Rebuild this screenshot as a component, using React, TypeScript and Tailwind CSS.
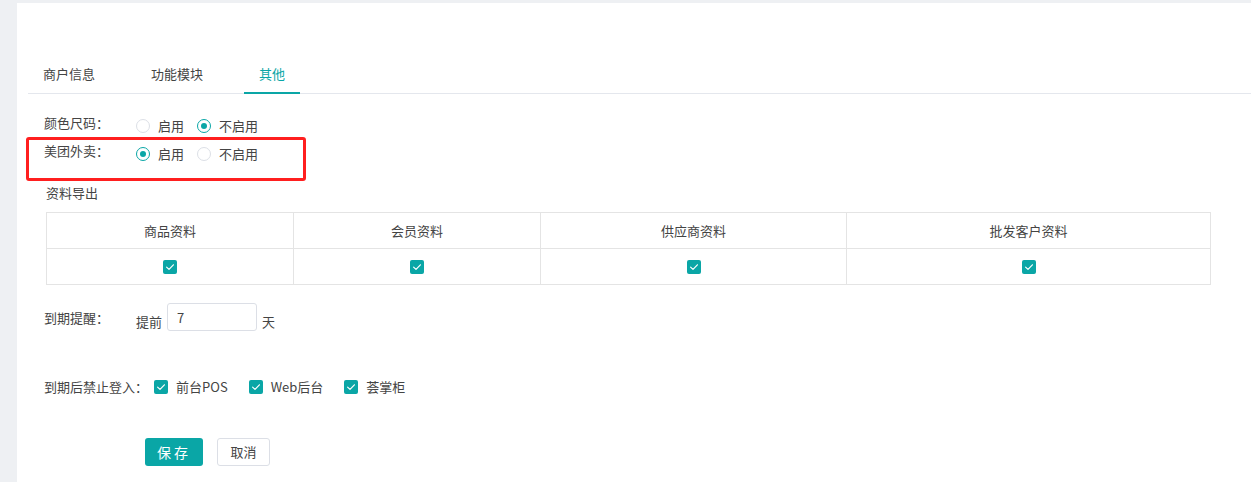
import React from 'react';

const TEAL = '#0aa6a6';

function CheckBox() {
  return (
    <span className="inline-flex h-[14px] w-[14px] shrink-0 items-center justify-center rounded-[2px] bg-[#0aa6a6]">
      <svg width="14" height="14" viewBox="0 0 14 14" fill="none">
        <path d="M3.6 7.1 L6 9.4 L10.4 4.8" stroke="#fff" strokeWidth="1.2" strokeLinecap="round" strokeLinejoin="round" />
      </svg>
    </span>
  );
}

function Radio({ checked, label }: { checked: boolean; label: string }) {
  return (
    <span className="flex items-center">
      {checked ? (
        <span className="flex h-[14px] w-[14px] items-center justify-center rounded-full border border-[#0aa6a6]">
          <span className="h-[6px] w-[6px] rounded-full bg-[#0aa6a6]" />
        </span>
      ) : (
        <span className="h-[14px] w-[14px] rounded-full border border-[#dcdfe6] bg-white" />
      )}
      <span className="ml-[8px] text-[13px] text-[#444]">{label}</span>
    </span>
  );
}

export default function App() {
  const tabs = ['商户信息', '功能模块', '其他'];
  const exportCols = [
    { name: '商品资料', w: 'w-[247px]' },
    { name: '会员资料', w: 'w-[247px]' },
    { name: '供应商资料', w: 'w-[306px]' },
    { name: '批发客户资料', w: 'flex-1' },
  ];

  return (
    <div
      className="h-[482px] overflow-hidden bg-[#eef0f3] pl-[17px] pt-[3px]"
      style={{ fontFamily: '"Noto Sans CJK SC", "Noto Sans", sans-serif' }}
    >
      <div className="relative h-full bg-white pt-[52px]">
        {/* Tabs */}
        <div className="ml-[11px] flex gap-[26px] border-b border-[#e4e7ed]">
          {tabs.map((t, i) => (
            <div
              key={t}
              className={
                i === 2
                  ? '-mb-px h-[39px] border-b-2 border-[#0aa6a6] px-[15px] text-[13px] leading-[37px] text-[#0aa6a6]'
                  : '-mb-px h-[39px] border-b-2 border-transparent px-[15px] text-[13px] leading-[37px] text-[#444]'
              }
            >
              {t}
            </div>
          ))}
        </div>

        <div className="pl-[27px]">
          {/* 颜色尺码 */}
          <div className="mt-[18px] flex h-[28px] items-start">
            <span className="w-[92px] text-[13px] leading-[22px] text-[#444]">颜色尺码：</span>
            <div className="flex h-[28px] items-center gap-[13px]">
              <Radio checked={false} label="启用" />
              <Radio checked label="不启用" />
            </div>
          </div>

          {/* 美团外卖 */}
          <div className="flex h-[28px] items-start">
            <span className="w-[92px] text-[13px] leading-[22px] text-[#444]">美团外卖：</span>
            <div className="flex h-[28px] items-center gap-[13px]">
              <Radio checked label="启用" />
              <Radio checked={false} label="不启用" />
            </div>
          </div>

          {/* 资料导出 */}
          <div className="ml-[2px] mt-[15px] text-[13px] leading-[20px] text-[#444]">资料导出</div>
          <div className="ml-[2px] mt-[9px] w-[1165px] border border-[#e4e4e4]">
            <div className="flex h-[36px] border-b border-[#e4e4e4]">
              {exportCols.map((c, i) => (
                <div
                  key={c.name}
                  className={`${c.w} flex items-center justify-center text-[13px] text-[#444] ${i < 3 ? 'border-r border-[#e4e4e4]' : ''}`}
                >
                  {c.name}
                </div>
              ))}
            </div>
            <div className="flex h-[35px]">
              {exportCols.map((c, i) => (
                <div
                  key={c.name}
                  className={`${c.w} flex items-center justify-center ${i < 3 ? 'border-r border-[#e4e4e4]' : ''}`}
                >
                  <CheckBox />
                </div>
              ))}
            </div>
          </div>

          {/* 到期提醒 */}
          <div className="mt-[18px] flex items-start">
            <span className="mt-[5px] w-[92px] text-[13px] leading-[20px] text-[#444]">到期提醒：</span>
            <div className="flex items-end">
              <span className="text-[13px] leading-[18px] text-[#444]">提前</span>
              <input
                defaultValue="7"
                className="ml-[5px] h-[28px] w-[90px] rounded-[3px] border border-[#dcdfe6] px-[9px] text-[13px] text-[#444] outline-none"
              />
              <span className="ml-[5px] text-[13px] leading-[18px] text-[#444]">天</span>
            </div>
          </div>

          {/* 到期后禁止登入 */}
          <div className="mt-[42px] flex h-[28px] items-center">
            <span className="w-[110px] text-[13px] text-[#444]">到期后禁止登入：</span>
            <div className="flex items-center gap-[21px]">
              {['前台POS', 'Web后台', '荟掌柜'].map((o) => (
                <span key={o} className="flex items-center">
                  <CheckBox />
                  <span className="ml-[8px] text-[13px] text-[#444]">{o}</span>
                </span>
              ))}
            </div>
          </div>

          {/* Buttons */}
          <div className="ml-[101px] mt-[37px] flex gap-[14px]">
            <button
              className="h-[28px] w-[58px] rounded-[3px] text-[14px] tracking-[3px] text-white"
              style={{ backgroundColor: TEAL }}
            >
              保存
            </button>
            <button className="h-[28px] w-[53px] rounded-[3px] border border-[#dcdfe6] bg-white text-[13px] text-[#444]">
              取消
            </button>
          </div>
        </div>

        {/* annotation box */}
        <div className="pointer-events-none absolute left-[9px] top-[134px] h-[44px] w-[280px] rounded-[3px] border-[3px] border-[#ff1f1f]" />
      </div>
    </div>
  );
}
